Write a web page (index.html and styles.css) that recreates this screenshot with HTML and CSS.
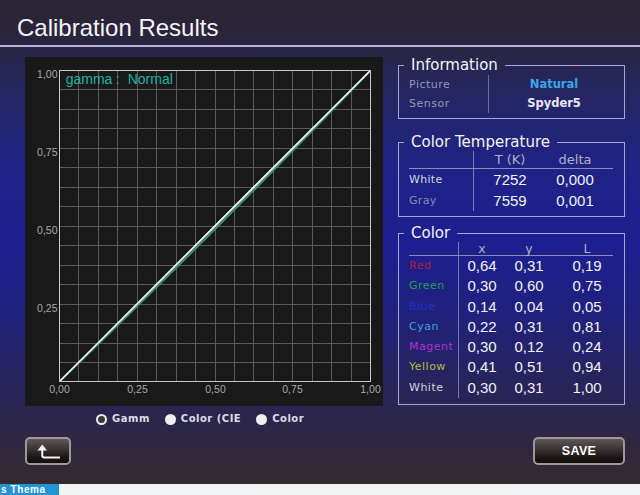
FILE: index.html
```html
<!DOCTYPE html>
<html lang="en">
<head>
<meta charset="utf-8">
<title>Calibration Results</title>
<link rel="stylesheet" href="styles.css">
</head>
<body>
<div class="screen">
  <header class="titlebar"><h1 class="title">Calibration Results</h1></header>
  <main class="main">
    <section class="left">
      <div class="chart">
        <svg class="plot" width="358" height="349" viewBox="0 0 358 349">
          <path class="grid" d="M53.5 13.5V324.5M73.5 13.5V324.5M92.5 13.5V324.5M112.5 13.5V324.5M131.5 13.5V324.5M151.5 13.5V324.5M170.5 13.5V324.5M190.5 13.5V324.5M209.5 13.5V324.5M228.5 13.5V324.5M248.5 13.5V324.5M267.5 13.5V324.5M287.5 13.5V324.5M306.5 13.5V324.5M326.5 13.5V324.5M34.5 32.5H345.5M34.5 52.5H345.5M34.5 71.5H345.5M34.5 91.5H345.5M34.5 110.5H345.5M34.5 130.5H345.5M34.5 149.5H345.5M34.5 169.5H345.5M34.5 188.5H345.5M34.5 208.5H345.5M34.5 227.5H345.5M34.5 247.5H345.5M34.5 266.5H345.5M34.5 286.5H345.5M34.5 305.5H345.5"/>
          <rect class="frame" x="34.5" y="13.5" width="311" height="311"/>
          <path class="curve-teal" d="M34.5 324.5Q193 172 345.5 13.5"/>
          <path class="curve-green" d="M34.5 324.5Q190 167.5 345.5 13.5"/>
          <path class="curve-white" d="M34.5 324.5L345.5 13.5"/>
          <text class="axis" x="32.5" y="21" text-anchor="end">1,00</text>
          <text class="axis" x="32.5" y="99" text-anchor="end">0,75</text>
          <text class="axis" x="32.5" y="177" text-anchor="end">0,50</text>
          <text class="axis" x="32.5" y="255" text-anchor="end">0,25</text>
          <text class="axis" x="34.5" y="336" text-anchor="middle">0,00</text>
          <text class="axis" x="112.5" y="336" text-anchor="middle">0,25</text>
          <text class="axis" x="190.5" y="336" text-anchor="middle">0,50</text>
          <text class="axis" x="267.5" y="336" text-anchor="middle">0,75</text>
          <text class="axis" x="345.5" y="336" text-anchor="middle">1,00</text>
          <text class="gamma" x="40.7" y="27"><tspan>gamma</tspan><tspan x="90.7">:</tspan><tspan x="102.7">Normal</tspan></text>
        </svg>
      </div>
      <div class="radios">
        <div class="radio"><span class="dot on"></span><span>Gamm</span></div>
        <div class="radio"><span class="dot"></span><span>Color (CIE</span></div>
        <div class="radio"><span class="dot"></span><span>Color</span></div>
      </div>
    </section>
    <aside class="right">
      <fieldset class="panel">
        <legend>Information</legend>
        <div class="info-row"><span class="lbl info-lbl">Picture</span><span class="info-val natural">Natural</span></div>
        <div class="info-row"><span class="lbl info-lbl">Sensor</span><span class="info-val">Spyder5</span></div>
      </fieldset>
      <fieldset class="panel panel-ct">
        <legend>Color Temperature</legend>
        <div class="ct-row ct-head"><span class="lbl"></span><span>T (K)</span><span class="last">delta</span></div>
        <div class="ct-row"><span class="lbl white">White</span><span class="num">7252</span><span class="num last">0,000</span></div>
        <div class="ct-row"><span class="lbl gray">Gray</span><span class="num">7559</span><span class="num last">0,001</span></div>
      </fieldset>
      <fieldset class="panel panel-color">
        <legend>Color</legend>
        <div class="c-row c-head"><span class="lbl"></span><span>x</span><span>y</span><span class="last">L</span></div>
        <div class="c-row"><span class="lbl red">Red</span><span class="num">0,64</span><span class="num">0,31</span><span class="num last">0,19</span></div>
        <div class="c-row"><span class="lbl green">Green</span><span class="num">0,30</span><span class="num">0,60</span><span class="num last">0,75</span></div>
        <div class="c-row"><span class="lbl blue">Blue</span><span class="num">0,14</span><span class="num">0,04</span><span class="num last">0,05</span></div>
        <div class="c-row"><span class="lbl cyan">Cyan</span><span class="num">0,22</span><span class="num">0,31</span><span class="num last">0,81</span></div>
        <div class="c-row"><span class="lbl magenta">Magent</span><span class="num">0,30</span><span class="num">0,12</span><span class="num last">0,24</span></div>
        <div class="c-row"><span class="lbl yellow">Yellow</span><span class="num">0,41</span><span class="num">0,51</span><span class="num last">0,94</span></div>
        <div class="c-row"><span class="lbl white">White</span><span class="num">0,30</span><span class="num">0,31</span><span class="num last">1,00</span></div>
      </fieldset>
    </aside>
  </main>
  <div class="actions">
    <button class="btn btn-back" type="button" aria-label="Back">
      <svg width="42" height="24" viewBox="0 0 42 24">
        <path class="arrow-head" d="M10.5 11.5L15.25 5.5L20 11.5Z"/>
        <path class="arrow-line" d="M15.25 10.5V16.5Q15.25 18.5 17.25 18.5H33"/>
      </svg>
    </button>
    <button class="btn btn-save" type="button">SAVE</button>
  </div>
</div>
<footer class="taskbar"><span class="tab">s Thema</span></footer>
</body>
</html>
```

FILE: styles.css
```css
* { box-sizing: border-box; }
html, body { margin: 0; padding: 0; }
body {
  width: 640px;
  height: 495px;
  overflow: hidden;
  background: #f3f3f3;
  font-family: "DejaVu Sans", sans-serif;
}
.screen {
  height: 484px;
  display: flex;
  flex-direction: column;
  color: #fff;
  background: linear-gradient(to bottom,
    #2b2433 0%, #2a2540 9%, #252660 18%, #1f2386 35%, #1c1f90 50%,
    #20217c 65%, #28245a 80%, #2f2740 92%, #352a30 100%);
}
.titlebar {
  height: 47px;
  padding: 16px 0 0 17px;
  border-bottom: 2px solid #b4b4dc;
}
.title {
  margin: 0;
  font: 400 24px/24px "Liberation Sans", Arial, sans-serif;
  color: #f4f4f4;
}
.main {
  display: flex;
  gap: 15px;
  padding-left: 25px;
}
.left {
  width: 358px;
  padding-top: 10px;
  display: flex;
  flex-direction: column;
}
.chart {
  width: 358px;
  height: 349px;
  background: #191919;
}
.plot { display: block; }
.grid { stroke: #5a5a5a; stroke-width: 1; fill: none; }
.frame { stroke: #c8c8c8; stroke-width: 1; fill: none; }
.curve-teal { stroke: #3b8c78; stroke-width: 2.2; fill: none; }
.curve-green { stroke: #9ee0b8; stroke-width: 1; fill: none; }
.curve-white { stroke: #f4f4f4; stroke-width: 1.6; fill: none; }
.axis {
  font-family: "Liberation Sans", Arial, sans-serif;
  font-size: 10.5px;
  fill: #a8a8a8;
}
.gamma {
  font-family: "Liberation Sans", Arial, sans-serif;
  font-size: 14px;
  fill: #22b0a4;
}
.radios {
  display: flex;
  align-items: center;
  gap: 15px;
  height: 14px;
  margin-top: 6px;
  padding-left: 71px;
}
.radio {
  display: flex;
  align-items: center;
  gap: 5px;
  font: 700 10px/14px "DejaVu Sans", sans-serif;
  letter-spacing: 0.5px;
  color: #dcdce4;
}
.dot {
  width: 11px;
  height: 11px;
  border-radius: 50%;
  background: #efefef;
}
.dot.on {
  background: #3a3a3a;
  border: 2px solid #efefef;
}
.right {
  width: 227px;
  padding-top: 9px;
}
.panel {
  margin: 0;
  min-width: 0;
  padding: 1px 5px 5px 10px;
  border: 1px solid #a6a6d0;
}
.panel legend {
  font: 400 15px/18px "DejaVu Sans", sans-serif;
  color: #f4f4f4;
  padding: 0 7px;
  margin-left: -5px;
}
.panel-ct { margin-top: 14px; padding-top: 0; }
.panel-color { margin-top: 7px; padding-top: 0; padding-bottom: 6px; }
.lbl {
  font-size: 11px;
  letter-spacing: 0.5px;
  border-right: 1px solid #7c7cac;
}
.info-row {
  display: grid;
  grid-template-columns: 80px 1fr;
  height: 19px;
  line-height: 19px;
}
.info-lbl { color: #9898b4; border-right-color: #6c6c98; }
.info-val {
  text-align: center;
  font-weight: 700;
  font-size: 11.5px;
  color: #e8e8f0;
}
.info-val.natural { color: #38a8e8; }
.ct-row {
  display: grid;
  grid-template-columns: 65px 72px 67px;
  height: 21px;
  line-height: 21px;
  text-align: center;
}
.ct-row .lbl { text-align: left; letter-spacing: 0.3px; }
.ct-row .last { padding-right: 9px; }
.ct-head {
  height: 18px;
  line-height: 17px;
  border-bottom: 1px solid #8a8ab4;
  width: 204px;
  font-size: 13px;
  color: #b0b0c8;
}
.num {
  font: 400 15px "Liberation Sans", Arial, sans-serif;
  color: #f2f2f2;
}
.ct-row .num { line-height: 21px; }
.c-row {
  display: grid;
  grid-template-columns: 50px 46px 48px 60px;
  height: 20.3px;
  line-height: 20.3px;
  text-align: center;
}
.c-row .lbl { text-align: left; }
.c-row .last { padding-left: 8px; }
.c-row .num { line-height: 20.3px; }
.c-head {
  height: 14px;
  line-height: 13px;
  border-bottom: 1px solid #8a8ab4;
  width: 204px;
  font-size: 12.5px;
  color: #b0b0c8;
}
.white { color: #d4d4e0; }
.gray { color: #8a8aa8; }
.red { color: #b21c3c; }
.green { color: #1fa050; }
.blue { color: #2030c8; }
.cyan { color: #30a8d8; }
.magenta { color: #b030d0; }
.yellow { color: #b8b840; }
.actions {
  display: flex;
  justify-content: space-between;
  margin-top: 11px;
  padding: 0 15px 0 25px;
}
.btn {
  height: 28px;
  padding: 0;
  border: 2px solid #9a9a9a;
  border-radius: 5px;
  background: linear-gradient(to bottom, #5e5656 0%, #3a3232 45%, #1c1616 75%, #130f0f 100%);
  display: flex;
  align-items: center;
  justify-content: center;
  color: #fff;
}
.btn-back { width: 46px; }
.btn-back svg { display: block; }
.arrow-head { fill: #f4f4f4; }
.arrow-line { fill: none; stroke: #f4f4f4; stroke-width: 2; }
.btn-save {
  width: 92px;
  font: 700 12.5px "Liberation Sans", Arial, sans-serif;
  letter-spacing: 0.3px;
}
.taskbar {
  height: 11px;
  background: #f4f4f4;
}
.tab {
  display: block;
  width: 59px;
  height: 11px;
  background: #2194d6;
  color: #fff;
  font: 700 10px/11px "Liberation Sans", Arial, sans-serif;
  letter-spacing: 0.6px;
  padding-left: 1px;
}
```
